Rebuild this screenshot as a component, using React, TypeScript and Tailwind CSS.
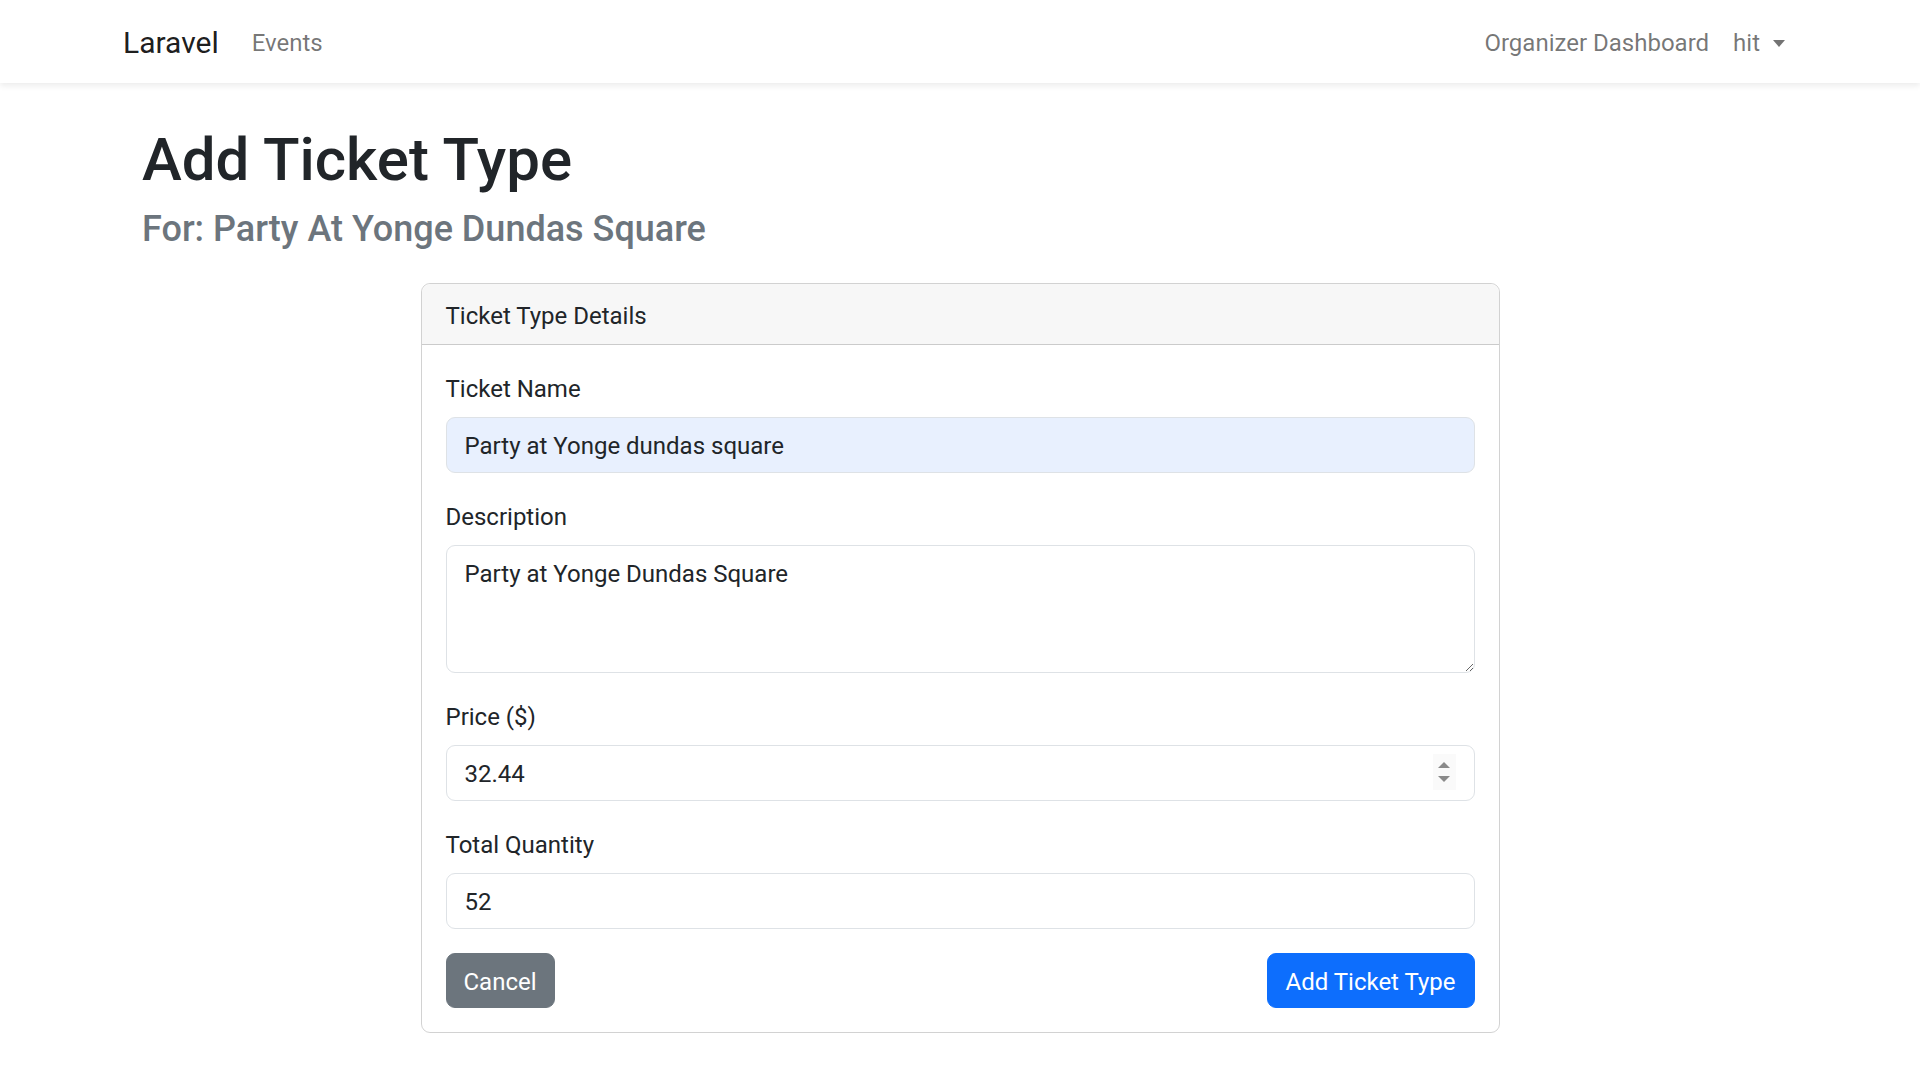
import React from "react";

export default function App() {
  return (
    <div className="min-h-[1069px] bg-white font-['Roboto',sans-serif] text-[24px] leading-[36px] text-[#212529]">
      <nav className="relative z-10 bg-white shadow-[0_3px_6px_rgba(0,0,0,0.075)]">
        <div className="mx-auto flex h-[83px] w-[1710px] items-center px-[18px] pt-[2px]">
          <span className="mr-[21px] text-[30px] leading-[45px] text-[rgba(0,0,0,0.9)]">Laravel</span>
          <span className="px-[12px] text-[rgba(0,0,0,0.55)]">Events</span>
          <div className="ml-auto flex items-center">
            <span className="px-[12px] text-[rgba(0,0,0,0.55)]">Organizer Dashboard</span>
            <span className="flex items-center px-[12px] text-[rgba(0,0,0,0.55)]">
              hit
              <span className="ml-[13px] mt-[2px] h-0 w-0 border-x-[6px] border-t-[7px] border-x-transparent border-t-[rgba(0,0,0,0.55)]"></span>
            </span>
          </div>
        </div>
      </nav>

      <main className="mx-auto w-[1710px] px-[37px] pb-[36px] pt-[41px]">
        <h1 className="mb-[12px] text-[60px] font-medium leading-[72px] text-[#212529]">Add Ticket Type</h1>
        <h4 className="mb-[32px] text-[36px] font-medium leading-[43px] text-[#6c757d]">For: Party At Yonge Dundas Square</h4>

        <div className="mx-auto w-[1079px] rounded-[9px] border border-[rgba(0,0,0,0.175)]">
          <div className="rounded-t-[9px] border-b border-[rgba(0,0,0,0.175)] bg-[#f7f7f7] px-[24px] pb-[10px] pt-[14px]">
            Ticket Type Details
          </div>
          <div className="p-[24px]">
            <div className="mb-[24px]">
              <label className="mb-[10px] block pt-[2px]">Ticket Name</label>
              <input
                readOnly
                value="Party at Yonge dundas square"
                className="block h-[56px] w-full rounded-[9px] border border-[#dee2e6] bg-[#e8f0fe] px-[18px] pt-[2px] text-[24px] text-[#212529] outline-none"
              />
            </div>
            <div className="mb-[24px]">
              <label className="mb-[10px] block pt-[2px]">Description</label>
              <textarea
                readOnly
                rows={3}
                value="Party at Yonge Dundas Square"
                className="block h-[128px] w-full rounded-[9px] border border-[#dee2e6] bg-white px-[18px] py-[10px] text-[24px] leading-[36px] text-[#212529] outline-none"
              />
            </div>
            <div className="mb-[24px]">
              <label className="mb-[10px] block pt-[2px]">Price ($)</label>
              <div className="relative">
                <input
                  readOnly
                  value="32.44"
                  className="block h-[56px] w-full rounded-[9px] border border-[#dee2e6] bg-white px-[18px] pt-[2px] text-[24px] text-[#212529] outline-none"
                />
                <div className="absolute right-[19px] top-[9px] flex h-[36px] w-[23px] flex-col items-center justify-center gap-[8px] bg-[#fafafa]">
                  <span className="h-0 w-0 border-x-[6px] border-b-[6px] border-x-transparent border-b-[#8a8a8a]"></span>
                  <span className="h-0 w-0 border-x-[6px] border-t-[6px] border-x-transparent border-t-[#8a8a8a]"></span>
                </div>
              </div>
            </div>
            <div className="mb-[24px]">
              <label className="mb-[10px] block pt-[2px]">Total Quantity</label>
              <input
                readOnly
                value="52"
                className="block h-[56px] w-full rounded-[9px] border border-[#dee2e6] bg-white px-[18px] pt-[2px] text-[24px] text-[#212529] outline-none"
              />
            </div>
            <div className="flex items-center justify-between">
              <button className="h-[55px] rounded-[9px] border border-[#6c757d] bg-[#6c757d] px-[17px] pt-[2px] text-[24px] text-white">
                Cancel
              </button>
              <button className="h-[55px] rounded-[9px] border border-[#0d6efd] bg-[#0d6efd] px-[18px] pt-[2px] text-[24px] text-white">
                Add Ticket Type
              </button>
            </div>
          </div>
        </div>
      </main>
    </div>
  );
}
